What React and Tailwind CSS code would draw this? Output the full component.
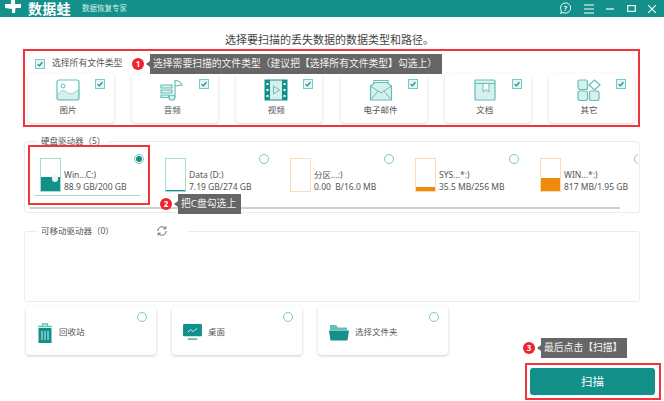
const font = { fontFamily: '"Noto Sans","Noto Sans CJK SC",sans-serif' };

function Check({ className = "" }) {
  return (
    <span className={`flex items-center justify-center w-[10px] h-[10px] border border-[#7cc8c2] bg-[#e3f4f2] ${className}`}>
      <svg viewBox="0 0 10 10" className="w-[8px] h-[8px]"><path d="M2 5.200 4.200 7.400 8 2.800" fill="none" stroke="#13908a" strokeWidth="1.600" /></svg>
    </span>
  );
}

function Radio({ on = false, className = "" }) {
  return (
    <span className={`flex items-center justify-center w-[10px] h-[10px] rounded-full border border-[#7cc8c2] bg-white ${className}`}>
      {on && <span className="w-[6px] h-[6px] rounded-full bg-[#13908a]" />}
    </span>
  );
}

const st = "#62bfb7";
const s = { fill: "#d8f0ed", stroke: st, strokeWidth: 1.200 };
const icons = {
  image: (
    <svg viewBox="0 0 24 22" className="w-[24px] h-[22px]">
      <rect x="1" y="1" width="22" height="20" rx="2" fill="#fff" stroke={st} strokeWidth="1.200" />
      <path d="M1.500 16c4-6 7-5 10-2.500s6 1 11-3V19a1.500 1.500 0 0 1-1.500 1.500h-18A1.500 1.500 0 0 1 1.500 19Z" fill="#d8f0ed" stroke={st} strokeWidth=".6" />
      <circle cx="7" cy="7" r="2" fill="none" stroke={st} />
    </svg>
  ),
  audio: (
    <svg viewBox="0 0 24 22" className="w-[24px] h-[22px]">
      <path d="M1 6h11v3H1ZM1 11h11v3H1ZM1 16h8v2.500H1Z" {...s} />
      <path d="M15 18V1.500c3 0 6 2 7 4.500l-7 1" fill="none" stroke={st} strokeWidth="1.200" />
      <ellipse cx="12" cy="18.500" rx="3" ry="2.500" {...s} />
    </svg>
  ),
  video: (
    <svg viewBox="0 0 24 22" className="w-[24px] h-[22px]">
      <rect x="1" y="1" width="22" height="20" fill="#d8f0ed" stroke="#13908a" />
      <path d="M1 1h5v20H1ZM18 1h5v20h-5Z" fill="#13908a" />
      <path d="M2.500 4h2v2h-2ZM2.500 10h2v2h-2ZM2.500 16h2v2h-2ZM19.500 4h2v2h-2ZM19.500 10h2v2h-2ZM19.500 16h2v2h-2Z" fill="#fff" />
      <path d="M9.500 7v8l6-4Z" fill="none" stroke={st} />
    </svg>
  ),
  mail: (
    <svg viewBox="0 0 24 22" className="w-[24px] h-[22px]">
      <path d="M5 4V1.500h14V4" fill="none" stroke={st} strokeWidth="1.200" />
      <path d="M1.500 7 6 3.500h12L22.500 7v14h-21Z" {...s} />
      <path d="M1.500 7 12 14l10.500-7M1.500 21 9 12M22.500 21 15 12" fill="none" stroke={st} />
    </svg>
  ),
  doc: (
    <svg viewBox="0 0 24 22" className="w-[24px] h-[22px]">
      <rect x="2" y="1" width="20" height="20" rx="1" {...s} />
      <path d="M2 4.500h20" stroke={st} />
      <path d="M10 4.500h6V13l-3-2.500L10 13Z" fill="#fff" stroke={st} />
    </svg>
  ),
  other: (
    <svg viewBox="0 0 24 22" className="w-[24px] h-[22px]">
      <rect x="1" y="1" width="9.500" height="9.500" rx="2" {...s} />
      <rect x="1" y="12" width="9.500" height="9.500" rx="2" {...s} />
      <rect x="12.500" y="12" width="9.500" height="9.500" rx="2" {...s} />
      <path d="M17.500 1 23 6l-5.500 5L12 6Z" fill="#fff" stroke={st} strokeWidth="1.200" />
    </svg>
  ),
};

const types = [
  ["图片", "image"],
  ["音频", "audio"],
  ["视频", "video"],
  ["电子邮件", "mail"],
  ["文档", "doc"],
  ["其它", "other"],
];

function TypeCard({ label, icon }) {
  return (
    <div className="relative w-[86px] h-[50px] rounded-[4px] bg-white shadow-[0_1px_3px_rgba(0,0,0,0.16)] flex flex-col items-center pt-[6px] pr-[6px]">
      {icons[icon]}
      <span className="mt-[3px] text-[8.500px] leading-[12px] text-[#555]">{label}</span>
      <Check className="absolute right-[9px] top-[6px]" />
    </div>
  );
}

function Drive({ name, size, pct, color, border, on, selected }) {
  return (
    <div className="relative w-[125px] h-[52px] shrink-0 pl-[12px] pt-[6px] flex items-start">
      <div className={`w-[21px] h-[34px] border bg-white flex flex-col justify-end shrink-0 ${border}`}>
        <div className={`relative ${color}`} style={{ height: `${pct}%` }}>
          {on && <span className="absolute right-[2px] top-[-2px] w-[6px] h-[7px] rounded-full bg-[#e8f5f4]" />}
        </div>
      </div>
      <div className="ml-[3px] mt-[11px] text-[8.500px] leading-[12px] text-[#555] whitespace-pre">
        <div>{name}</div>
        <div>{size}</div>
      </div>
      <Radio on={selected} className="absolute left-[106px] top-[2px]" />
      {selected && <div className="absolute left-[6px] top-[43px] w-[106px] h-[1px] bg-[#a8dad6]" />}
    </div>
  );
}

function Tip({ n, text, className }) {
  return (
    <div className={`absolute flex items-center ${className}`}>
      <span className="w-[12px] h-[12px] rounded-full bg-[#f2222c] text-white text-[8px] leading-[12px] text-center font-bold shrink-0">{n}</span>
      <span className="ml-[2px] w-0 h-0 border-y-[3px] border-y-transparent border-r-[4px] border-r-[#666]" />
      <span className="bg-[#666] text-[#f2f2f2] text-[9.800px] h-[20px] leading-[20px] pl-[3px] pr-[5px] whitespace-nowrap">{text}</span>
    </div>
  );
}

function Place({ label, icon }) {
  return (
    <div className="relative w-[130px] h-[49px] rounded-[4px] bg-white shadow-[0_1px_3px_rgba(0,0,0,0.2)] flex items-center pl-[11px] pt-[4px]">
      {icon}
      <span className="ml-[6px] text-[8.500px] text-[#555]">{label}</span>
      <Radio className="absolute right-[9px] top-[6px]" />
    </div>
  );
}

export default function App() {
  return (
    <div style={font} className="relative w-[664px] h-[401px] overflow-hidden bg-white">
      <header className="h-[17px] bg-[#13908a] flex items-center text-white overflow-hidden">
        <svg viewBox="0 0 16 14" className="ml-[5px] w-[16px] h-[14px] mt-[-3px]">
          <path d="M6 0h4v4h6v4h-5.500L10 13H7V9L0 8V4h6Z" fill="#fff" />
        </svg>
        <span className="ml-[7px] text-[14px] font-bold leading-[17px] tracking-[0.300px] mt-[-1px]">数据蛙</span>
        <span className="ml-[11px] text-[7.500px] text-[#d5eeec]">数据恢复专家</span>
        <div className="ml-auto flex items-center mr-[8px]">
          <svg viewBox="0 0 14 14" className="w-[13px] h-[13px]">
            <path d="M7 1a5.500 5.500 0 1 1-2.800 10.200L1.800 12.500l.8-2.800A5.500 5.500 0 0 1 7 1Z" fill="none" stroke="#fff" />
            <text x="7" y="9.500" fontSize="7.500" textAnchor="middle" fill="#fff" fontWeight="700">?</text>
          </svg>
          <svg viewBox="0 0 10 10" className="ml-[12px] w-[10px] h-[10px]"><path d="M0 1h10M0 5h10M0 9h10" stroke="#fff" /></svg>
          <svg viewBox="0 0 8 8" className="ml-[12px] w-[8px] h-[8px]"><path d="M0 4h8" stroke="#fff" strokeWidth="1.200" /></svg>
          <svg viewBox="0 0 10 8" className="ml-[13px] w-[9px] h-[7px]"><rect x=".7" y=".7" width="8.600" height="6.600" fill="none" stroke="#fff" strokeWidth="1.300" /></svg>
          <svg viewBox="0 0 8 8" className="ml-[12px] w-[8px] h-[8px]"><path d="M0 0 8 8M8 0 0 8" stroke="#fff" strokeWidth="1.100" /></svg>
        </div>
      </header>

      <h1 className="mt-[15px] pl-[225px] text-[11px] leading-[16px] font-normal text-[#444] whitespace-nowrap">选择要扫描的丢失数据的数据类型和路径。</h1>

      <section className="ml-[28px] mt-[8px] w-[607px]">
        <div className="flex items-center h-[15px] pl-[7px]">
          <Check />
          <span className="ml-[7px] text-[8.800px] text-[#555] whitespace-nowrap">选择所有文件类型</span>
        </div>
        <div className="mt-[2px] flex justify-between">
          {types.map(([l, i]) => <TypeCard key={l} label={l} icon={i} />)}
        </div>
      </section>

      <section className="relative ml-[24px] mt-[18px] w-[616px] h-[72px] rounded-[3px] border border-[#ececec]">
        <span className="absolute left-[13px] top-[-7px] bg-white px-[3px] text-[8.500px] leading-[12px] text-[#555] whitespace-nowrap">硬盘驱动器（5）</span>
        <div className="ml-[3px] mt-[10px] w-[610px] flex overflow-hidden">
          <Drive name="Win...C:)" size="88.9 GB/200 GB" pct={45} color="bg-[#13908a]" border="border-[#a8dad6]" selected on />
          <Drive name="Data (D:)" size="7.19 GB/274 GB" pct={4} color="bg-[#13908a]" border="border-[#a8dad6]" />
          <Drive name="分区...:)" size="0.00  B/16.0 MB" pct={0} color="bg-[#f08a0c]" border="border-[#fbdcb8]" />
          <Drive name="SYS...*:)" size="35.5 MB/256 MB" pct={14} color="bg-[#f08a0c]" border="border-[#fbdcb8]" />
          <Drive name="WIN...*:)" size="817 MB/1.95 GB" pct={42} color="bg-[#f08a0c]" border="border-[#fbdcb8]" />
        </div>
        <div className="ml-[5px] mt-[3px] w-[590px] h-[2px] bg-[#cfcfcf]" />
      </section>

      <section className="relative ml-[24px] mt-[18px] w-[616px] h-[71px] rounded-[3px] border border-[#ececec]">
        <div className="absolute left-[13px] top-[-7px] flex items-center bg-white px-[3px] w-[150px]">
          <span className="text-[8.500px] leading-[12px] text-[#555] whitespace-nowrap">可移动驱动器（0）</span>
          <svg viewBox="0 0 14 14" className="absolute left-[118px] top-0 w-[12px] h-[12px]">
            <path d="M2 7a5 5 0 0 1 9-3M12 7a5 5 0 0 1-9 3" fill="none" stroke="#555" />
            <path d="M11.500 1.500V4.500H8.500M2.500 12.500V9.500H5.500" fill="none" stroke="#555" />
          </svg>
        </div>
      </section>

      <section className="ml-[26px] mt-[4px] flex gap-[16px]">
        <Place label="回收站" icon={
          <svg viewBox="0 0 16 20" className="w-[16px] h-[20px]">
            <path d="M1 3.500h14M5.500 3V1h5v2" fill="none" stroke={st} strokeWidth="1.300" />
            <rect x="1.500" y="5" width="13" height="15" fill="#13908a" />
            <path d="M5 8v9M8 8v9M11 8v9" stroke="#cdeeea" />
          </svg>
        } />
        <Place label="桌面" icon={
          <svg viewBox="0 0 20 18" className="w-[19px] h-[17px]">
            <rect x="0" y="0" width="20" height="13" rx="1" fill="#13908a" />
            <path d="M5 8.500 8 6l2.500 2L15 4.500" fill="none" stroke="#d8f0ed" />
            <rect x="5" y="15" width="10" height="2" fill={st} />
          </svg>
        } />
        <Place label="选择文件夹" icon={
          <svg viewBox="0 0 20 17" className="w-[20px] h-[17px]">
            <path d="M1 1h6l2 2.500h9V6H1Z" fill={st} />
            <path d="M0 6.500h20l-1.500 10h-17Z" fill="#13908a" />
          </svg>
        } />
      </section>

      <div className="mt-[13px] ml-[530px] w-[125px] h-[27px]">
        <button className="w-full h-full rounded-[3px] bg-[#13908a] text-white text-[11.500px]">扫描</button>
      </div>

      {/* Annotations laid over the screen */}
      <div className="absolute left-[23px] top-[49px] w-[617px] h-[78px] border-2 border-[#f0353b]" />
      <div className="absolute left-[28px] top-[145px] w-[122px] h-[60px] border-2 border-[#f0353b]" />
      <div className="absolute left-[525px] top-[363px] w-[136px] h-[37px] border-2 border-[#f0353b]" />
      <Tip n="1" className="left-[132px] top-[54px]" text="选择需要扫描的文件类型（建议把【选择所有文件类型】勾选上）" />
      <Tip n="2" className="left-[160px] top-[194px]" text="把C盘勾选上" />
      <Tip n="3" className="left-[523px] top-[338px]" text="最后点击【扫描】" />
    </div>
  );
}
